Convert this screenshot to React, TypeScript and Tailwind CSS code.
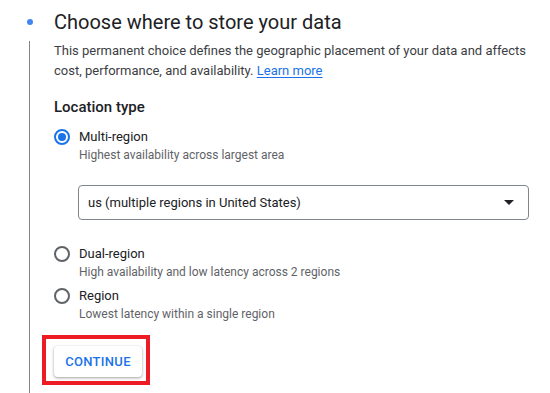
import React from "react";

function Radio({ checked }: { checked?: boolean }) {
  return (
    <span
      className={`flex h-[16px] w-[16px] shrink-0 items-center justify-center rounded-full border-2 ${
        checked ? "border-[#1a73e8]" : "border-[#5f6368]"
      }`}
    >
      {checked && <span className="h-[8px] w-[8px] rounded-full bg-[#1a73e8]" />}
    </span>
  );
}

function Option({
  label,
  hint,
  checked,
}: {
  label: string;
  hint: string;
  checked?: boolean;
}) {
  return (
    <div className="flex flex-col">
      <div className="flex items-center gap-[9px]">
        <Radio checked={checked} />
        <span className="text-[13px] leading-[20px] text-[#202124]">{label}</span>
      </div>
      <div className="pl-[25px] text-[12px] leading-[16px] text-[#5f6368]">{hint}</div>
    </div>
  );
}

export default function App() {
  return (
    <div className="h-[393px] w-[550px] overflow-hidden bg-white font-['Roboto',sans-serif]">
      {/* step header */}
      <div className="flex h-[41px] items-start pt-[8px]">
        <div className="w-[54px] shrink-0">
          <div className="ml-[27px] mt-[11px] h-[6px] w-[6px] rounded-full bg-[#4285f4]" />
        </div>
        <h1 className="text-[20px] font-normal leading-[28px] text-[#202124]">
          Choose where to store your data
        </h1>
      </div>

      {/* step body */}
      <div className="flex h-[352px]">
        <div className="w-[54px] shrink-0">
          <div className="ml-[29px] h-full w-px bg-[#80868b]" />
        </div>
        <div className="w-[478px]">
          <p className="text-[13px] leading-[20px] text-[#3c4043]">
            This permanent choice defines the geographic placement of your data and affects
            cost, performance, and availability.{" "}
            <a href="#" className="text-[#1a73e8] underline underline-offset-2">
              Learn more
            </a>
          </p>

          <h2 className="mt-[14px] text-[15px] font-medium leading-[24px] text-[#202124]">
            Location type
          </h2>

          <div className="mt-[8px]">
            <Option
              checked
              label="Multi-region"
              hint="Highest availability across largest area"
            />
          </div>

          <div className="ml-[24px] mt-[22px] flex h-[35px] w-[451px] items-center justify-between rounded-[4px] border border-[#80868b] pl-[9px] pr-[14px]">
            <span className="text-[13px] text-[#202124]">
              us (multiple regions in United States)
            </span>
            <svg width="10" height="5" viewBox="0 0 10 5">
              <path d="M0 0 L10 0 L5 5 Z" fill="#202124" />
            </svg>
          </div>

          <div className="mt-[24px] flex flex-col gap-[6px]">
            <Option
              label="Dual-region"
              hint="High availability and low latency across 2 regions"
            />
            <Option label="Region" hint="Lowest latency within a single region" />
          </div>

          <div className="relative mt-[24px] w-[88px]">
            <button className="flex h-[31px] w-[88px] items-center justify-center rounded-[4px] bg-white text-[13px] font-medium tracking-[0.3px] text-[#1a73e8] shadow-[0_1px_2px_rgba(60,64,67,0.3),0_1px_3px_1px_rgba(60,64,67,0.15)]">
              CONTINUE
            </button>
            <div className="pointer-events-none absolute left-[-12px] top-[-11px] h-[50px] w-[108px] border-4 border-[#ed1c24]" />
          </div>
        </div>
      </div>
    </div>
  );
}
